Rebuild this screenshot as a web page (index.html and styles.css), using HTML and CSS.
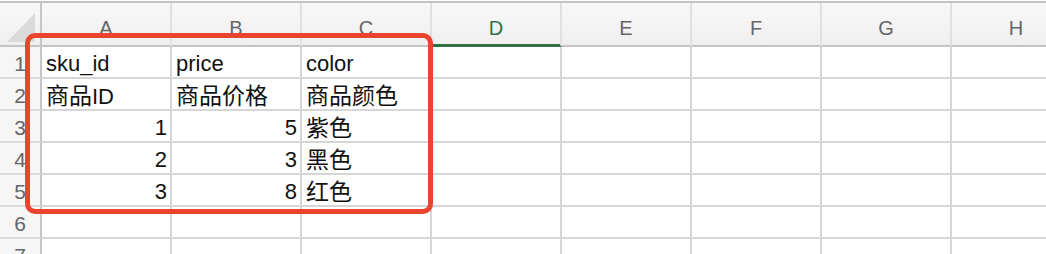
FILE: index.html
```html
<!DOCTYPE html>
<html lang="zh-CN">
<head>
    <meta charset="UTF-8">
    <title>sheet</title>
    <link rel="stylesheet" href="styles.css">
</head>
<body>
    <div class="sheet">
        <div class="head corner"></div>
        <div class="head">A</div>
        <div class="head">B</div>
        <div class="head">C</div>
        <div class="head active">D</div>
        <div class="head">E</div>
        <div class="head">F</div>
        <div class="head">G</div>
        <div class="head">H</div>

        <div class="num">1</div>
        <div class="cell">sku_id</div>
        <div class="cell">price</div>
        <div class="cell">color</div>
        <div class="cell"></div><div class="cell"></div><div class="cell"></div><div class="cell"></div><div class="cell"></div>

        <div class="num">2</div>
        <div class="cell"><span class="zh">商品</span>ID</div>
        <div class="cell"><span class="zh">商品价格</span></div>
        <div class="cell"><span class="zh">商品颜色</span></div>
        <div class="cell"></div><div class="cell"></div><div class="cell"></div><div class="cell"></div><div class="cell"></div>

        <div class="num">3</div>
        <div class="cell right">1</div>
        <div class="cell right">5</div>
        <div class="cell"><span class="zh">紫色</span></div>
        <div class="cell"></div><div class="cell"></div><div class="cell"></div><div class="cell"></div><div class="cell"></div>

        <div class="num">4</div>
        <div class="cell right">2</div>
        <div class="cell right">3</div>
        <div class="cell"><span class="zh">黑色</span></div>
        <div class="cell"></div><div class="cell"></div><div class="cell"></div><div class="cell"></div><div class="cell"></div>

        <div class="num">5</div>
        <div class="cell right">3</div>
        <div class="cell right">8</div>
        <div class="cell"><span class="zh">红色</span></div>
        <div class="cell"></div><div class="cell"></div><div class="cell"></div><div class="cell"></div><div class="cell"></div>

        <div class="num">6</div>
        <div class="cell"></div><div class="cell"></div><div class="cell"></div><div class="cell"></div>
        <div class="cell"></div><div class="cell"></div><div class="cell"></div><div class="cell"></div>

        <div class="num">7</div>
        <div class="cell"></div><div class="cell"></div><div class="cell"></div><div class="cell"></div>
        <div class="cell"></div><div class="cell"></div><div class="cell"></div><div class="cell"></div>
    </div>

    <!-- 선택 영역 표시 -->
    <div class="mark"></div>
</body>
</html>
```

FILE: styles.css
```css
html, body {
    margin: 0;
    padding: 0;
    background: #fff;
    overflow: hidden;
}
body {
    position: relative;
    padding-top: 1px;
    font-family: "Liberation Sans", "Noto Sans CJK SC", sans-serif;
}
.sheet {
    display: grid;
    grid-template-columns: 42px repeat(8, 130px);
    grid-template-rows: 44px repeat(7, 32px);
    border-top: 2px solid #c2c2c2;
}
.sheet > div {
    box-sizing: border-box;
    white-space: nowrap;
}
.head {
    background: linear-gradient(#f8f8f8, #efefef);
    border-right: 2px solid #e0e0e0;
    border-bottom: 2px solid #c4c4c4;
    color: #666;
    font-size: 20px;
    text-align: center;
    padding-top: 8px;
    line-height: 34px;
}
.head.active {
    color: #2f7446;
    border-bottom-color: #356f47;
    box-shadow: inset 0 -1px 0 #356f47;
}
.corner {
    border-right-color: #c6c6c6;
    padding-top: 10px;
}
.corner:after {
    content: "";
    display: block;
    width: 28px;
    height: 29px;
    margin-left: 7px;
    background: #dadada;
    clip-path: polygon(100% 0, 100% 100%, 0 100%);
}
.num {
    background: #f6f6f6;
    border-right: 2px solid #c6c6c6;
    border-bottom: 2px solid #dadada;
    color: #666;
    font-size: 21px;
    text-align: center;
    padding-top: 4px;
    line-height: 26px;
}
.cell {
    border-right: 2px solid #d6d6d6;
    border-bottom: 2px solid #d6d6d6;
    color: #111;
    font-size: 22px;
    padding: 4px 4px 0;
    line-height: 26px;
}
.cell .zh {
    font-family: "Noto Sans CJK SC", sans-serif;
    font-size: 23px;
    line-height: 1;
}
.cell.right {
    text-align: right;
    padding-right: 3px;
}
.mark {
    position: absolute;
    left: 25px;
    top: 33px;
    width: 408px;
    height: 181px;
    box-sizing: border-box;
    border: 5px solid #e8442e;
    border-radius: 10px;
}
```
